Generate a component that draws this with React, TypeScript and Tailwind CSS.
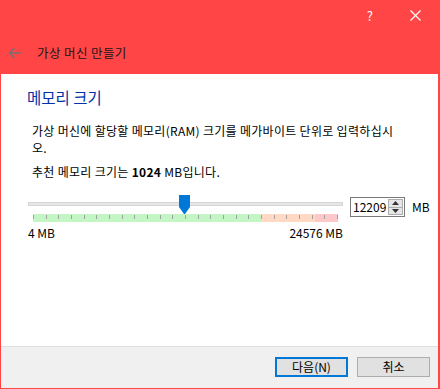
const font = "font-['Noto_Sans_CJK_KR','Noto_Sans',sans-serif]"

const ticks = Array.from({ length: 25 }, (_, i) => i)

function Slider() {
  const min = 4
  const max = 24576
  const value = 12209
  const pos = ((value - min) / (max - min)) * 305
  return (
    <div className="relative w-[315px] h-[28px]">
      <div className="absolute left-0 top-[7px] w-[315px] h-[4px] bg-[#e7e7e7] border border-[#d6d6d6]" />
      <div className="absolute left-[5px] top-[19px] w-[305px] h-[8px] flex">
        <div className="w-[228px] h-full bg-[#c4f5c4]" />
        <div className="w-[54px] h-full bg-[#ffd9c4]" />
        <div className="flex-1 h-full bg-[#ffc8c8]" />
      </div>
      {ticks.map((t) => (
        <div
          key={t}
          className="absolute top-[20px] w-px h-[4px] bg-[#a0a0a0]"
          style={{ left: 5 + Math.round((t * 304) / 24) }}
        />
      ))}
      <svg
        className="absolute top-0"
        style={{ left: pos }}
        width="11"
        height="19"
        viewBox="0 0 11 19"
      >
        <polygon points="0,0 11,0 11,12 6,19 5,19 0,12" fill="#0078d7" />
      </svg>
    </div>
  )
}

function SpinBox() {
  return (
    <div className="w-[55px] h-[20px] border border-[#7a7a7a] bg-white flex items-center justify-between pl-[2px] pr-px">
      <span className="text-[12px] leading-none">12209</span>
      <div className="w-[15px] h-[16px] flex flex-col border border-[#adadad] bg-[#e5e5e5]">
        <div className="flex-1 flex items-center justify-center border-b border-[#adadad]">
          <svg width="7" height="4" viewBox="0 0 7 4">
            <polygon points="3.5,0 7,4 0,4" fill="#333" />
          </svg>
        </div>
        <div className="flex-1 flex items-center justify-center">
          <svg width="7" height="4" viewBox="0 0 7 4">
            <polygon points="0,0 7,0 3.5,4" fill="#333" />
          </svg>
        </div>
      </div>
    </div>
  )
}

export default function App() {
  return (
    <div className={`w-[440px] h-[389px] bg-[#ff4545] pl-px pr-[2px] pb-px flex flex-col text-[#000] ${font}`}>
      <header className="h-[74px] flex flex-col">
        <div className="h-[30px] flex items-center justify-end">
          <span className="text-white text-[13px] leading-none mr-[37px]">?</span>
          <svg width="11" height="11" viewBox="0 0 11 11" className="mr-[17px]">
            <path d="M0.5 0.5 L10.5 10.5 M10.5 0.5 L0.5 10.5" stroke="#fff" strokeWidth="1.2" />
          </svg>
        </div>
        <div className="h-[44px] flex items-center pl-[7px] pt-[2px]">
          <svg width="14" height="12" viewBox="0 0 14 12">
            <path d="M13 6 H1.5 M6.5 1 L1.5 6 L6.5 11" stroke="#787070" strokeWidth="1.6" fill="none" />
          </svg>
          <span className="ml-[15px] text-[12.5px] leading-none text-[#201818] tracking-[0.4px]">가상 머신 만들기</span>
        </div>
      </header>
      <main className="flex-1 bg-white flex flex-col">
        <div className="flex-1 flex flex-col pt-[13px]">
          <h1 className="pl-[26px] text-[15.5px] leading-[20px] text-[#0033a8]">메모리 크기</h1>
          <p className="pl-[31px] mt-[15px] text-[12px] leading-[17px] tracking-[0.3px]">
            가상 머신에 할당할 메모리(RAM) 크기를 메가바이트 단위로 입력하십시
            <br />
            오.
          </p>
          <p className="pl-[31px] mt-[7px] text-[12px] leading-[17px] tracking-[0.3px]">
            추천 메모리 크기는 <b>1024</b> MB입니다.
          </p>
          <div className="mt-[15px] pl-[27px] flex items-start">
            <div className="flex flex-col">
              <Slider />
              <div className="flex justify-between text-[12px] leading-[14px] mt-[3px]">
                <span>4 MB</span>
                <span>24576 MB</span>
              </div>
            </div>
            <div className="ml-[7px] mt-[2px]">
              <SpinBox />
            </div>
            <span className="ml-[7px] mt-[6px] text-[12px] leading-none">MB</span>
          </div>
        </div>
        <footer className="h-[42px] bg-[#f0f0f0] border-t border-[#dfdfdf] flex items-start justify-end gap-[9px] pt-[10px] pr-[8px]">
          <button className="w-[73px] h-[20px] border-2 border-[#0078d7] bg-[#e1e1e1] text-[12px] leading-none">
            다음(N)
          </button>
          <button className="w-[73px] h-[20px] border border-[#adadad] bg-[#e1e1e1] text-[12px] leading-none">
            취소
          </button>
        </footer>
      </main>
    </div>
  )
}
